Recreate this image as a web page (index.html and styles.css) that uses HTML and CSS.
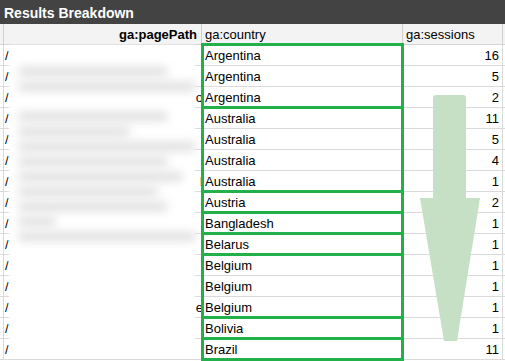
FILE: index.html
```html
<!DOCTYPE html>
<html>
<head>
<meta charset="utf-8">
<link rel="stylesheet" href="styles.css">
</head>
<body>
<div class="sheet">
  <div class="title">Results Breakdown</div>
  <div class="grid">
    <div class="row head">
      <div class="cell gut"></div>
      <div class="cell hd-bold">ga:pagePath</div>
      <div class="cell">ga:country</div>
      <div class="cell">ga:sessions</div>
    </div>
    <div class="row"><div class="cell gut"></div><div class="cell path"><span>/</span></div><div class="cell">Argentina</div><div class="cell num">16</div></div>
    <div class="row"><div class="cell gut"></div><div class="cell path"><span>/</span></div><div class="cell">Argentina</div><div class="cell num">5</div></div>
    <div class="row"><div class="cell gut"></div><div class="cell path"><span>/</span><span class="tail">o</span></div><div class="cell">Argentina</div><div class="cell num">2</div></div>
    <div class="row"><div class="cell gut"></div><div class="cell path"><span>/</span></div><div class="cell">Australia</div><div class="cell num">11</div></div>
    <div class="row"><div class="cell gut"></div><div class="cell path"><span>/</span></div><div class="cell">Australia</div><div class="cell num">5</div></div>
    <div class="row"><div class="cell gut"></div><div class="cell path"><span>/</span></div><div class="cell">Australia</div><div class="cell num">4</div></div>
    <div class="row"><div class="cell gut"></div><div class="cell path"><span>/</span><span class="tail">l</span></div><div class="cell">Australia</div><div class="cell num">1</div></div>
    <div class="row"><div class="cell gut"></div><div class="cell path"><span>/</span></div><div class="cell">Austria</div><div class="cell num">2</div></div>
    <div class="row"><div class="cell gut"></div><div class="cell path"><span>/</span></div><div class="cell">Bangladesh</div><div class="cell num">1</div></div>
    <div class="row"><div class="cell gut"></div><div class="cell path"><span>/</span></div><div class="cell">Belarus</div><div class="cell num">1</div></div>
    <div class="row"><div class="cell gut"></div><div class="cell path"><span>/</span></div><div class="cell">Belgium</div><div class="cell num">1</div></div>
    <div class="row"><div class="cell gut"></div><div class="cell path"><span>/</span></div><div class="cell">Belgium</div><div class="cell num">1</div></div>
    <div class="row"><div class="cell gut"></div><div class="cell path"><span>/</span><span class="tail">e</span></div><div class="cell">Belgium</div><div class="cell num">1</div></div>
    <div class="row"><div class="cell gut"></div><div class="cell path"><span>/</span></div><div class="cell">Bolivia</div><div class="cell num">1</div></div>
    <div class="row"><div class="cell gut"></div><div class="cell path"><span>/</span></div><div class="cell">Brazil</div><div class="cell num">11</div></div>

    <div class="blur">
      <div class="bl" style="width:0px"></div>
      <div class="bl" style="width:150px"></div>
      <div class="bl" style="width:178px"></div>
      <div class="bl" style="width:0px"></div>
      <div class="bl" style="width:150px"></div>
      <div class="bl" style="width:112px"></div>
      <div class="bl" style="width:178px"></div>
      <div class="bl" style="width:150px"></div>
      <div class="bl" style="width:165px"></div>
      <div class="bl" style="width:140px"></div>
      <div class="bl" style="width:150px"></div>
      <div class="bl" style="width:38px"></div>
      <div class="bl" style="width:178px"></div>
      <div class="bl" style="width:0px"></div>
      <div class="bl" style="width:0px"></div>
    </div>

    <div class="box" style="top:19px;height:66px"></div>
    <div class="box" style="top:82px;height:87px"></div>
    <div class="box" style="top:166px;height:24px"></div>
    <div class="box" style="top:187px;height:24px"></div>
    <div class="box" style="top:208px;height:24px"></div>
    <div class="box" style="top:229px;height:66px"></div>
    <div class="box" style="top:292px;height:24px"></div>
    <div class="box" style="top:313px;height:24px"></div>

    <svg class="arrow" width="505" height="337" viewBox="0 24 505 337">
      <rect x="433" y="95" width="33" height="110" rx="3" fill="#c6e0c5"/>
      <polygon points="420,198 480,198 457,341 444,341" fill="#c6e0c5"/>
    </svg>
  </div>
</div>
</body>
</html>
```

FILE: styles.css
```css
html, body {
  margin: 0;
  padding: 0;
  background: #fff;
}
.sheet {
  width: 505px;
  height: 361px;
  overflow: hidden;
  font-family: "Liberation Sans", Arial, sans-serif;
  font-size: 13px;
  color: #000;
}
.title {
  height: 24px;
  line-height: 26px;
  background: #434343;
  color: #fff;
  font-weight: bold;
  font-size: 14px;
  padding-left: 4px;
  box-sizing: border-box;
}
.grid {
  position: relative;
}
.row {
  display: grid;
  grid-template-columns: 4px 198px 201px 100px;
  height: 21px;
  border-bottom: 1px solid #dadada;
  box-sizing: border-box;
}
.head {
  background: #f3f3f3;
  border-bottom-color: #d4d4d4;
}
.cell {
  border-right: 1px solid #dadada;
  box-sizing: border-box;
  padding: 1px 3px 0;
  line-height: 20px;
  white-space: nowrap;
  overflow: hidden;
}
.head .cell {
  border-right-color: #d0d0d0;
}
.gut {
  padding: 0;
}
.path {
  display: flex;
  justify-content: space-between;
  padding-left: 1px;
  padding-right: 0;
}
.tail {
  margin-right: -2px;
}
.hd-bold {
  font-weight: bold;
  text-align: right;
  padding-right: 4px;
}
.num {
  text-align: right;
}
.blur {
  position: absolute;
  left: 10px;
  top: 22px;
  width: 184px;
  height: 310px;
  background: #fff;
  box-shadow: 0 0 2px 1px #fff;
}
.bl {
  height: 9px;
  margin: 6px 0 6px 8px;
  background: #dedede;
  border-radius: 5px;
  filter: blur(5px);
}
.box {
  position: absolute;
  left: 201px;
  width: 203px;
  border: 3px solid #22b04b;
  box-sizing: border-box;
}
.arrow {
  position: absolute;
  left: 0;
  top: 0;
  display: block;
}
```
